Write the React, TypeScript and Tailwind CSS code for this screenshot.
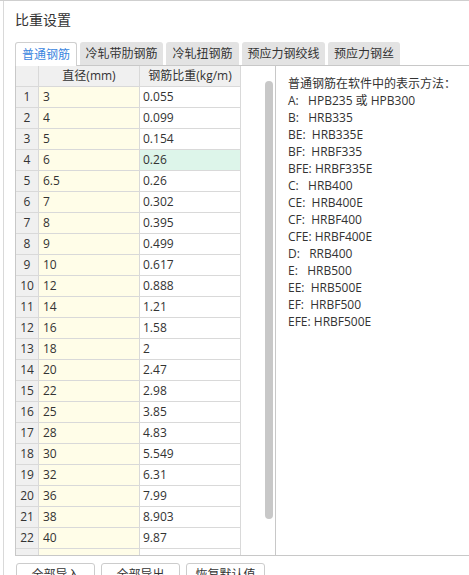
import React from "react";

const rows: [string, string][] = [
  ["3", "0.055"],
  ["4", "0.099"],
  ["5", "0.154"],
  ["6", "0.26"],
  ["6.5", "0.26"],
  ["7", "0.302"],
  ["8", "0.395"],
  ["9", "0.499"],
  ["10", "0.617"],
  ["12", "0.888"],
  ["14", "1.21"],
  ["16", "1.58"],
  ["18", "2"],
  ["20", "2.47"],
  ["22", "2.98"],
  ["25", "3.85"],
  ["28", "4.83"],
  ["30", "5.549"],
  ["32", "6.31"],
  ["36", "7.99"],
  ["38", "8.903"],
  ["40", "9.87"],
  ["", ""],
];

const tabs = ["普通钢筋", "冷轧带肋钢筋", "冷轧扭钢筋", "预应力钢绞线", "预应力钢丝"];
const tabWidths = ["w-[62px]", "w-[83px]", "w-[73px]", "w-[83px]", "w-[72px]"];

const legend = [
  "A:   HPB235 或 HPB300",
  "B:   HRB335",
  "BE:  HRB335E",
  "BF:  HRBF335",
  "BFE: HRBF335E",
  "C:   HRB400",
  "CE:  HRB400E",
  "CF:  HRBF400",
  "CFE: HRBF400E",
  "D:   RRB400",
  "E:   HRB500",
  "EE:  HRB500E",
  "EF:  HRBF500",
  "EFE: HRBF500E",
];

export default function App() {
  return (
    <div className="w-[469px] h-[575px] overflow-hidden bg-white border-t border-[#cfcfcf] flex font-['Open_Sans','Noto_Sans_CJK_SC',sans-serif] text-[#333]">
      <div className="w-[3px] shrink-0" />
      <div className="flex-1 border-l border-[#d9d9d9] pl-[11px] flex flex-col">
        <div className="pt-[9px] text-[14px] leading-[20px]">比重设置</div>

        {/* tabs */}
        <div className="mt-[12px] flex items-start gap-[3px] h-[24px] relative z-10">
          {tabs.map((t, i) =>
            i === 0 ? (
              <div
                key={t}
                className={`${tabWidths[i]} h-[24px] bg-white border border-b-0 border-[#cfcfcf] rounded-t-[3px] flex items-center justify-center text-[12px] text-[#3a86e0]`}
              >
                {t}
              </div>
            ) : (
              <div
                key={t}
                className={`${tabWidths[i]} h-[23px] bg-[#e3e3e3] rounded-t-[3px] flex items-center justify-center text-[12px] text-[#333]`}
              >
                {t}
              </div>
            )
          )}
        </div>

        {/* panel */}
        <div className="-mt-px h-[491px] border-l border-t border-b border-[#c8c8c8] flex">
          <div className="w-[260px] shrink-0 border-r border-[#c8c8c8] flex overflow-hidden">
            <div className="w-[225px] shrink-0 flex flex-col text-[12px]">
              <div className="flex h-[21px] shrink-0 border-b border-[#d9d9d9] bg-[#f0f0f0]">
                <div className="w-[23px] border-r border-[#d9d9d9]" />
                <div className="w-[101px] border-r border-[#d9d9d9] flex items-center justify-center">直径(mm)</div>
                <div className="w-[101px] border-r border-[#d9d9d9] flex items-center justify-center">钢筋比重(kg/m)</div>
              </div>
              {rows.map(([d, w], i) => (
                <div key={i} className="flex h-[21px] shrink-0 border-b border-[#d9d9d9]">
                  <div className="w-[23px] bg-[#f0f0f0] border-r border-[#d9d9d9] flex items-center justify-center">
                    {d ? i + 1 : ""}
                  </div>
                  <div className="w-[101px] bg-[#fffde8] border-r border-[#d9d9d9] flex items-center pl-[4px]">{d}</div>
                  <div
                    className={`w-[101px] border-r border-[#d9d9d9] flex items-center pl-[3px] ${
                      i === 3 ? "bg-[#ddf5ea]" : "bg-white"
                    }`}
                  >
                    {w}
                  </div>
                </div>
              ))}
            </div>
            <div className="flex-1 flex justify-end pr-[2px]">
              <div className="mt-[15px] w-[8px] h-[438px] rounded-full bg-[#c8c8c8]" />
            </div>
          </div>
          <div className="flex-1 pl-[12px] pt-[9px] text-[12px] leading-[17px] whitespace-pre">
            <div>普通钢筋在软件中的表示方法：</div>
            {legend.map((l) => (
              <div key={l}>{l}</div>
            ))}
          </div>
        </div>

        {/* buttons */}
        <div className="mt-[7px] flex gap-[6px] pl-px">
          {["全部导入", "全部导出", "恢复默认值"].map((b) => (
            <div
              key={b}
              className="w-[79px] h-[24px] shrink-0 border border-[#cccccc] rounded-[3px] bg-white flex items-center justify-center text-[12px] leading-[16px]"
            >
              {b}
            </div>
          ))}
        </div>
      </div>
    </div>
  );
}
